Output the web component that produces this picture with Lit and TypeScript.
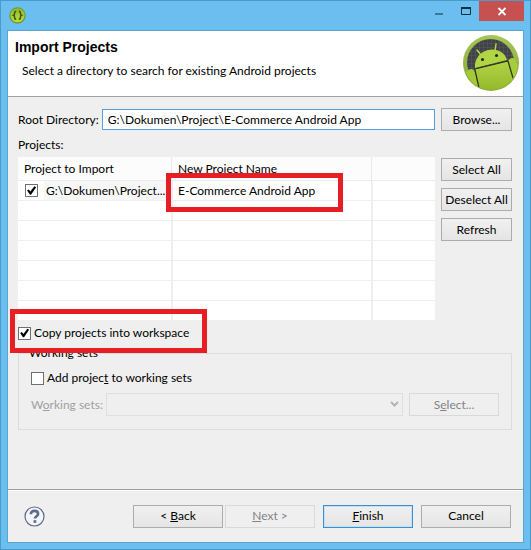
import { LitElement, html, css } from "lit";
import { customElement, state } from "lit/decorators.js";

@customElement("app-root")
export class AppRoot extends LitElement {
  @state() private directory = "G:\\Dokumen\\Project\\E-Commerce Android App";
  @state() private copyProjects = true;
  @state() private projectChecked = true;

  static styles = css`
    :host {
      display: block;
      font: 12px/16px Lato, "Open Sans", sans-serif;
      color: #000;
    }
    * {
      box-sizing: border-box;
    }
    .window {
      display: flex;
      flex-direction: column;
      min-height: 100vh;
      padding: 0 6px 6px;
      background: #6abff0;
      border: 1px solid #4a9cc8;
    }
    .titlebar {
      display: flex;
      height: 29px;
      justify-content: space-between;
    }
    .app-icon {
      width: 17px;
      height: 17px;
      margin: 6px 2px;
    }
    .caption {
      display: flex;
    }
    .caption button {
      width: 27px;
      height: 20px;
      padding: 0;
      border: 0;
      background: none;
    }
    .caption button.close {
      width: 45px;
      background: #c75050;
    }
    .caption svg {
      display: block;
      margin: 0 auto;
    }
    .client {
      flex: 1;
      display: flex;
      flex-direction: column;
      background: #efefef;
      border: 1px solid #5aa5cc;
    }
    .header {
      display: flex;
      justify-content: space-between;
      height: 66px;
      padding: 4px 4px 0 7px;
      background: #fff;
      border-bottom: 1px solid #a0a0a0;
    }
    h1 {
      margin: 4px 0 8px;
      font: bold 14px/16px "Liberation Sans", Arial, sans-serif;
    }
    .header p {
      margin: 0 0 0 7px;
    }
    .logo {
      width: 56px;
      height: 56px;
    }
    .body {
      flex: 1;
      padding: 11px 11px 0 10px;
    }
    .root-row,
    .projects {
      display: flex;
      gap: 6px;
    }
    .root-row {
      align-items: center;
    }
    .root-row label,
    .sets-row label {
      margin-right: -3px;
    }
    .path {
      flex: 1;
      min-width: 0;
      height: 21px;
      padding: 0 5px;
      font: inherit;
      color: inherit;
      background: #fff;
      border: 1px solid #569de5;
      outline: 0;
    }
    .btn {
      width: 90px;
      height: 23px;
      padding: 0;
      font: inherit;
      color: #000;
      text-align: center;
      background: linear-gradient(#f0f0f0, #e5e5e5);
      border: 1px solid #acacac;
      border-radius: 0;
      white-space: nowrap;
    }
    .btn.side {
      width: 71px;
    }
    .btn:disabled {
      color: #838383;
      background: #efefef;
      border-color: #d9d9d9;
    }
    .btn.default {
      border-color: #3c8fd0;
      box-shadow: inset 0 0 0 1px #c4e0f5;
    }
    .caption-text {
      margin: 6px 0 4px;
    }
    .side-buttons {
      display: flex;
      flex-direction: column;
      gap: 7px;
      padding-top: 1px;
    }
    .table {
      flex: 1;
      min-width: 0;
      table-layout: fixed;
      border-collapse: separate;
      border-spacing: 0;
      background: #fff;
    }
    .c1 {
      width: 153px;
    }
    .c2 {
      width: 200px;
    }
    th {
      height: 24px;
      padding: 0 6px;
      font-weight: normal;
      text-align: left;
      background: #fcfcfc;
      border-bottom: 1px solid #ebebf2;
    }
    th + th {
      border-left: 1px solid #e8e8ee;
    }
    td {
      position: relative;
      height: 20px;
      padding: 0 5px;
      border-bottom: 1px solid #efefef;
      white-space: nowrap;
    }
    td + td {
      border-left: 2px solid #efefef;
    }
    tr:last-child td {
      height: 19px;
      border-bottom: 0;
    }
    .item {
      display: flex;
      align-items: center;
      gap: 6px;
    }
    .item span {
      flex: 1;
      overflow: hidden;
      line-height: 19px;
      padding-left: 2px;
      margin-right: -5px;
      background: #f7f7f7;
    }
    input[type="checkbox"] {
      appearance: none;
      flex: none;
      width: 13px;
      height: 13px;
      margin: 0;
      background: #fff;
      border: 1px solid #707070;
    }
    td input[type="checkbox"] {
      margin-left: 2px;
    }
    input[type="checkbox"]:checked::before {
      content: "";
      display: block;
      width: 11px;
      height: 11px;
      background: #000;
      clip-path: polygon(10% 50%, 26% 40%, 40% 60%, 76% 12%, 92% 20%, 46% 88%, 36% 88%);
    }
    .mark {
      position: absolute;
      z-index: 1;
      border: 5px solid #e81e25;
      pointer-events: none;
    }
    .mark.name {
      inset: -8px 28px -12px -7px;
    }
    .mark.copy {
      inset: -16px -18px -12px -8px;
    }
    .check {
      display: flex;
      align-items: center;
      gap: 3px;
      width: fit-content;
    }
    .copy-row {
      position: relative;
      margin-top: 5px;
    }
    fieldset {
      min-width: 0;
      margin: 4px 0 0;
      padding: 9px 12px 13px 12px;
      border: 1px solid #dcdcdc;
    }
    legend {
      margin-left: -3px;
      padding: 0 1px;
    }
    .sets-row {
      display: flex;
      align-items: center;
      gap: 6px;
      margin-top: 7px;
      color: #a0a0a0;
    }
    .combo {
      flex: 1;
      position: relative;
      display: flex;
    }
    .combo select {
      appearance: none;
      width: 100%;
      height: 23px;
      border: 1px solid #d9d9d9;
      border-radius: 0;
      background: #efefef;
    }
    .combo svg {
      position: absolute;
      right: 4px;
      top: 8px;
    }
    .footer {
      display: flex;
      align-items: center;
      height: 53px;
      padding: 0 12px 0 16px;
      border-top: 1px solid #a0a0a0;
      box-shadow: inset 0 1px #fff;
    }
    .help {
      width: 21px;
      height: 21px;
      padding: 0;
      margin-right: auto;
      border: 0;
      background: none;
    }
    .help svg {
      display: block;
    }
    .nav {
      display: flex;
      gap: 2px;
      margin-right: 8px;
    }
    .finish {
      display: flex;
      gap: 8px;
    }
  `;

  render() {
    return html`
      <div class="window">
        <div class="titlebar">
          <svg class="app-icon" viewBox="0 0 17 17" aria-hidden="true">
            <defs>
              <linearGradient id="g" x1="0" y1="0" x2="0" y2="1">
                <stop offset="0" stop-color="#8db82a" />
                <stop offset="1" stop-color="#c0e03a" />
              </linearGradient>
            </defs>
            <circle cx="8.500" cy="8.500" r="8.200" fill="#6d9a34" />
            <circle cx="8.500" cy="8.300" r="7" fill="url(#g)" />
            <path d="M7.200 4.300c-1.300 0-1.600.6-1.600 1.900 0 1.200-.2 1.700-1.100 2.100.9.400 1.100.9 1.100 2.100 0 1.300.3 1.900 1.600 1.900M9.800 4.300c1.300 0 1.600.6 1.600 1.900 0 1.200.2 1.700 1.100 2.100-.9.400-1.100.9-1.100 2.100 0 1.300-.3 1.900-1.600 1.900" fill="none" stroke="#435214" stroke-width="1.500" />
          </svg>
          <div class="caption">
            <button aria-label="Minimize">
              <svg width="27" height="20"><rect x="10" y="12" width="8" height="2" fill="#3c7796" /></svg>
            </button>
            <button aria-label="Maximize">
              <svg width="27" height="20"><path d="M9 6h9v7H9z" fill="none" stroke="#122f40" stroke-width="1" transform="translate(.5 .5)" /><path d="M9 7h10" stroke="#122f40" stroke-width="2" /></svg>
            </button>
            <button class="close" aria-label="Close">
              <svg width="45" height="20"><path d="M19.500 7l7 7M26.500 7l-7 7" stroke="#fff" stroke-width="1.800" /></svg>
            </button>
          </div>
        </div>
        <div class="client">
          <div class="header">
            <div>
              <h1>Import Projects</h1>
              <p>Select a directory to search for existing Android projects</p>
            </div>
            ${this.logo()}
          </div>
          <div class="body">
            <div class="root-row">
              <label for="dir">Root Directory:</label>
              <input id="dir" class="path" type="text" .value=${this.directory}
                @input=${(e: Event) => (this.directory = (e.target as HTMLInputElement).value)} />
              <button class="btn side">Browse...</button>
            </div>
            <div class="caption-text" id="projects-label">Projects:</div>
            <div class="projects">
              <table class="table" aria-labelledby="projects-label">
                <colgroup><col class="c1" /><col class="c2" /><col /></colgroup>
                <thead>
                  <tr><th>Project to Import</th><th>New Project Name</th><th></th></tr>
                </thead>
                <tbody>
                  <tr>
                    <td>
                      <label class="item">
                        <input type="checkbox" .checked=${this.projectChecked}
                          @change=${(e: Event) => (this.projectChecked = (e.target as HTMLInputElement).checked)} />
                        <span>G:\\Dokumen\\Project...</span>
                      </label>
                    </td>
                    <td>E-Commerce Android App<div class="mark name"></div></td>
                    <td></td>
                  </tr>
                  ${[1, 2, 3, 4, 5, 6].map(() => html`<tr><td></td><td></td><td></td></tr>`)}
                </tbody>
              </table>
              <div class="side-buttons">
                <button class="btn side">Select All</button>
                <button class="btn side">Deselect All</button>
                <button class="btn side">Refresh</button>
              </div>
            </div>
            <label class="check copy-row">
              <input type="checkbox" .checked=${this.copyProjects}
                @change=${(e: Event) => (this.copyProjects = (e.target as HTMLInputElement).checked)} />
              Copy projects into workspace
              <div class="mark copy"></div>
            </label>
            <fieldset>
              <legend>Working sets</legend>
              <label class="check">
                <input type="checkbox" />
                <span>Add projec<u>t</u> to working sets</span>
              </label>
              <div class="sets-row">
                <label for="sets">W<u>o</u>rking sets:</label>
                <div class="combo">
                  <select id="sets" disabled></select>
                  <svg width="9" height="7" aria-hidden="true"><path d="M1 1l3.500 3.500L8 1" fill="none" stroke="#b4b4b4" stroke-width="2" /></svg>
                </div>
                <button class="btn" disabled>S<u>e</u>lect...</button>
              </div>
            </fieldset>
          </div>
          <div class="footer">
            <button class="help" aria-label="Help">
              <svg width="21" height="21" viewBox="0 0 21 21">
                <circle cx="10.500" cy="10.500" r="9.500" fill="#f4f5f8" stroke="#5d6c8a" stroke-width="1.200" />
                <path d="M6.800 8.200c0-2.200 1.500-3.300 3.600-3.300 2.200 0 3.700 1.100 3.700 3 0 2.300-3.200 2.300-3.200 4.700" fill="none" stroke="#5d6c8a" stroke-width="2.600" />
                <rect x="9.500" y="14.200" width="2.800" height="2.600" fill="#5d6c8a" />
              </svg>
            </button>
            <div class="nav">
              <button class="btn">&lt; <u>B</u>ack</button>
              <button class="btn" disabled><u>N</u>ext &gt;</button>
            </div>
            <div class="finish">
              <button class="btn default"><u>F</u>inish</button>
              <button class="btn">Cancel</button>
            </div>
          </div>
        </div>
      </div>
    `;
  }

  private logo() {
    return html`
      <svg class="logo" viewBox="0 0 56 56" aria-hidden="true">
        <defs>
          <pattern id="mesh" width="4" height="4" patternUnits="userSpaceOnUse">
            <rect width="4" height="4" fill="#414347" />
            <path d="M0 0h4M0 0v4" stroke="#55585c" />
          </pattern>
          <linearGradient id="ring" x1="0" y1="0" x2="0" y2="1">
            <stop offset="0" stop-color="#a6c655" />
            <stop offset="1" stop-color="#86a632" />
          </linearGradient>
          <linearGradient id="bot" x1="0" y1="0" x2="0" y2="1">
            <stop offset="0" stop-color="#b2d544" />
            <stop offset="1" stop-color="#93b82c" />
          </linearGradient>
          <clipPath id="disc"><circle cx="28" cy="28" r="27" /></clipPath>
        </defs>
        <circle cx="28" cy="28" r="28" fill="url(#ring)" />
        <g clip-path="url(#disc)">
          <circle cx="27.500" cy="27.500" r="23.500" fill="url(#mesh)" />
          <path d="M3 38c2-5 8-5 9-1l5 19H3z" fill="#a3c83a" />
          <path d="M12 34L45 26l11 16v14H16z" fill="url(#bot)" />
          <path d="M45 26c2-4 7-4 8 0l3 10v19h-6z" fill="#a6ca40" />
          <path d="M12 33c-1-9 5-16 13-18s17 2 19 10z" fill="#b2d544" />
          <path d="M14 15l4 5M33 9l-1 7" stroke="#b2d544" stroke-width="1.500" stroke-linecap="round" />
          <path d="M12 34l33-8M12 35l4 18M45 26l5 17" stroke="#2b3311" stroke-width="1.200" fill="none" />
          <circle cx="19.500" cy="24.500" r="1.500" fill="#222" />
          <circle cx="33.500" cy="20.500" r="1.500" fill="#222" />
        </g>
      </svg>
    `;
  }
}
